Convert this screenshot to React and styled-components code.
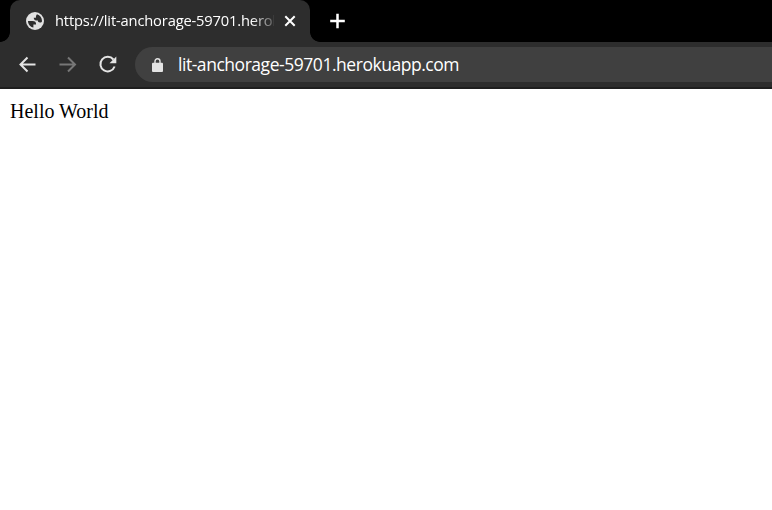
import React from "react";
import styled, { createGlobalStyle } from "styled-components";

const GlobalStyle = createGlobalStyle`
  * { box-sizing: border-box; }
  body { margin: 0; background: #fff; overflow: hidden; }
`;

const Browser = styled.div`
  width: 100%;
  height: 100vh;
  display: flex;
  flex-direction: column;
  background: #fff;
  font-family: "Open Sans", "Noto Sans", sans-serif;
`;

const TabStrip = styled.header`
  height: 42px;
  flex: none;
  display: flex;
  background: #000;
  padding-left: 10px;
`;

const Tab = styled.div`
  position: relative;
  width: 300px;
  height: 42px;
  display: flex;
  align-items: center;
  padding-left: 15px;
  background: #2d2d2d;
  border-radius: 10px 10px 0 0;

  &::before,
  &::after {
    content: "";
    position: absolute;
    bottom: 0;
    width: 10px;
    height: 10px;
  }
  &::before {
    left: -10px;
    background: radial-gradient(circle at 0 0, transparent 9.5px, #2d2d2d 10.2px);
  }
  &::after {
    right: -10px;
    background: radial-gradient(circle at 100% 0, transparent 9.5px, #2d2d2d 10.2px);
  }
`;

const TabTitle = styled.span`
  width: 219px;
  margin: 0 0 2px 10px;
  overflow: hidden;
  white-space: nowrap;
  color: #fff;
  font-size: 14.7px;
  line-height: 20px;
  letter-spacing: -0.16px;
  mask-image: linear-gradient(to right, #000 196px, transparent 225px);
`;

const Button = styled.button`
  width: ${(p) => p.$width || 20}px;
  height: ${(p) => p.$width || 20}px;
  flex: none;
  padding: 0;
  border: 0;
  background: none;
  display: grid;
  place-items: center;
  color: ${(p) => (p.$dim ? "#777" : "#e4e4e4")};
`;

const TabClose = styled(Button)`
  margin-left: 5px;
  color: #fff;
`;

const NewTab = styled(Button)`
  margin: 11px 0 0 17px;
  color: #fff;
`;

const Toolbar = styled.nav`
  height: 47px;
  flex: none;
  display: flex;
  align-items: center;
  gap: 20px;
  padding-left: 18px;
  background: #2d2d2d;
  border-bottom: 2px solid #1e1e1e;
`;

const AddressBar = styled.div`
  flex: 1;
  height: 35px;
  margin-left: -3px;
  padding-left: 15px;
  display: flex;
  align-items: center;
  background: #404040;
  border-radius: 18px 0 0 18px;
`;

const Address = styled.span`
  margin: 0 0 1px 14px;
  color: #fff;
  font-size: 17.5px;
  line-height: 24px;
  letter-spacing: -0.46px;
  white-space: nowrap;
`;

const Page = styled.main`
  flex: 1;
  padding: 11px 10px;
  color: #000;
  font: 20px/23px "Liberation Serif", serif;
`;

const Icon = styled.svg`
  display: block;
  flex: none;
  fill: none;
  stroke: currentColor;
`;

const Globe = () => (
  <Icon width="20" height="20" viewBox="0 0 20 20">
    <circle cx="10" cy="10" r="9" fill="#e1e1e1" stroke="none" />
    <path
      d="M3 10h4.4c2.6 0 3.8 1.2 3.7 3.4H8.4v3.2C5.1 15.9 3 13.2 3 10Z"
      fill="#2d2d2d"
      stroke="none"
    />
    <path
      d="M12 3.3c3 .9 5 3.6 5 6.7 0 1-.8 1.5-2 1.5-1.5 0-2.2-.7-2.1-1.9-2.6.1-4.1-.9-4.2-2.9h2.2c0-1.4.2-2.4 1.1-3.4Z"
      fill="#2d2d2d"
      stroke="none"
    />
  </Icon>
);

export default function App() {
  return (
    <Browser>
      <GlobalStyle />
      <TabStrip>
        <Tab>
          <Globe />
          <TabTitle>https://lit-anchorage-59701.herok</TabTitle>
          <TabClose aria-label="Close tab" $width={22}>
            <Icon width="12" height="12" viewBox="0 0 12 12" strokeWidth="2">
              <path d="m1.3 1.3 9.4 9.4m0-9.4-9.4 9.4" />
            </Icon>
          </TabClose>
        </Tab>
        <NewTab aria-label="New tab">
          <Icon width="16" height="16" viewBox="0 0 16 16" strokeWidth="2.5">
            <path d="M8.5.7v14.6M1.2 8h14.6" />
          </Icon>
        </NewTab>
      </TabStrip>
      <Toolbar>
        <Button aria-label="Back">
          <Icon width="20" height="20" viewBox="0 0 20 20" strokeWidth="2">
            <path d="M17.5 9.5H3M9.5 2.5l-7 7 7 7" />
          </Icon>
        </Button>
        <Button aria-label="Forward" $dim>
          <Icon width="20" height="20" viewBox="0 0 20 20" strokeWidth="2">
            <path d="M1.5 9.5H17M10 2.5l7 7-7 7" />
          </Icon>
        </Button>
        <Button aria-label="Reload">
          <Icon width="20" height="20" viewBox="0 0 20 20" strokeWidth="2">
            <path d="M15.4 4.5a7.3 7.3 0 1 0 1.2 7" />
            <path d="M18.3 1.5v6.8h-6.8Z" fill="currentColor" stroke="none" />
          </Icon>
        </Button>
        <AddressBar>
          <Icon width="14" height="16" viewBox="0 0 14 16" strokeWidth="1.4">
            <rect x="2" y="5.7" width="11" height="9.3" rx="1" fill="#e4e4e4" stroke="none" />
            <path d="M5 6V4.2a2.5 2.5 0 0 1 5 0V6" stroke="#e4e4e4" />
          </Icon>
          <Address>lit-anchorage-59701.herokuapp.com</Address>
        </AddressBar>
      </Toolbar>
      <Page>Hello World</Page>
    </Browser>
  );
}
